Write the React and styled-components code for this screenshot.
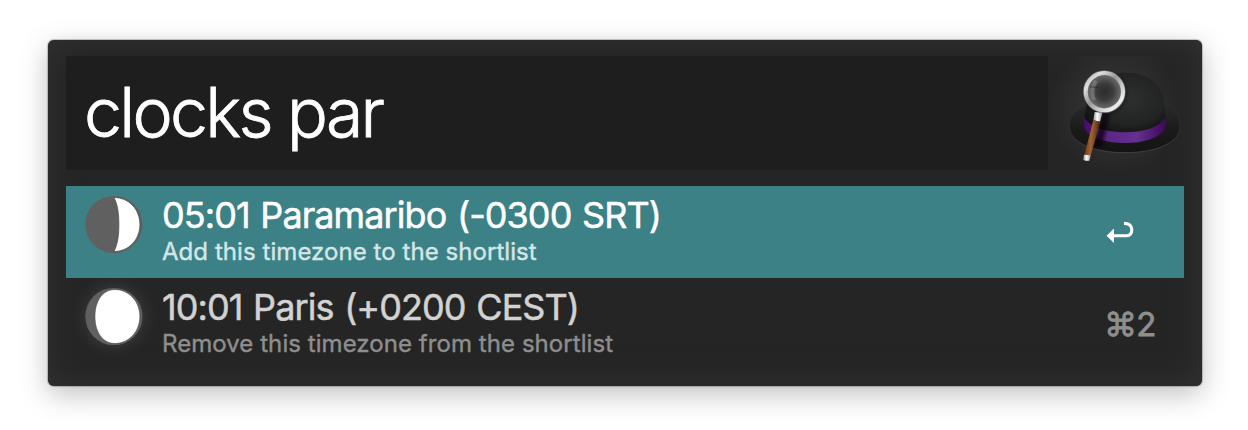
import React from 'react';
import styled, { createGlobalStyle } from 'styled-components';

const GlobalStyle = createGlobalStyle`
  *, *::before, *::after { box-sizing: border-box; }
  body { margin: 0; background: #fff; font-family: Inter, "Liberation Sans", sans-serif; }
`;

const Stage = styled.main`
  width: 1248px;
  height: 430px;
  padding: 40px 46px 44px 48px;
  overflow: hidden;
`;

const Launcher = styled.section`
  display: flex;
  flex-direction: column;
  gap: 16px;
  width: 1154px;
  height: 346px;
  padding: 16px 18px;
  border-radius: 6px;
  background: #252525;
  box-shadow: inset 0 0 34px #323232, 0 0 1px 1px rgba(0, 0, 0, 0.22),
    0 8px 28px rgba(0, 0, 0, 0.25);
`;

const Header = styled.header`
  display: flex;
  height: 114px;
`;

const Query = styled.div`
  display: flex;
  flex: none;
  align-items: center;
  width: 982px;
  padding: 0 0 2px 18px;
  background: #1e1e1e;
  color: #fff;
  font-size: 68px;
  font-weight: 300;
  letter-spacing: -2.75px;
  line-height: 80px;
  white-space: pre;
  -webkit-text-stroke: 0.8px currentColor;
`;

const Logo = styled.div`
  flex: none;
  width: 136px;
  padding: 10px 0 0 18px;
  background: radial-gradient(circle at 50% 45%, #313131 30%, rgba(46, 46, 46, 0) 72%);

  svg { display: block; }
`;

const Results = styled.ul`
  margin: 0;
  padding: 0;
  list-style: none;
`;

const Row = styled.li`
  display: flex;
  height: 92px;
  padding-left: 18px;
  background: ${(p) => (p.$selected ? '#3b8186' : 'transparent')};
`;

const MoonIcon = styled.svg`
  flex: none;
  width: 60px;
  height: 60px;
  margin: 8px 18px 0 0;
  overflow: visible;
  filter: ${(p) => (p.$glow ? 'drop-shadow(0 0 9px rgba(255,255,255,0.13))' : 'none')};
`;

const Labels = styled.div`
  flex: 1;
  padding-top: 7px;
  white-space: nowrap;
`;

const Title = styled.div`
  color: ${(p) => (p.$selected ? '#fff' : '#d2d2d2')};
  font-size: 36px;
  line-height: 44px;
  letter-spacing: -0.92px;
  word-spacing: 1.4px;
  -webkit-text-stroke: 0.5px currentColor;
`;

const Subtitle = styled.div`
  color: ${(p) => (p.$selected ? '#d5e6e6' : '#8e8e8e')};
  font-size: 24px;
  line-height: 30px;
  letter-spacing: 0.06px;
  -webkit-text-stroke: 0.4px currentColor;
`;

const Shortcut = styled.div`
  display: flex;
  align-items: center;
  width: 78px;
  color: ${(p) => (p.$selected ? '#fff' : '#8e8e8e')};
  font-size: 33px;
  line-height: 40px;
  letter-spacing: -0.8px;
  text-indent: -2px;
  -webkit-text-stroke: 0.8px currentColor;
`;

const AppHat = () => (
  <svg width="120" height="100" viewBox="78 78 360 300">
    <defs>
      <radialGradient id="crown" cx="0.55" cy="0.45" r="0.62">
        <stop offset="0" stopColor="#2d302f" />
        <stop offset="0.7" stopColor="#222423" />
        <stop offset="1" stopColor="#111212" />
      </radialGradient>
      <linearGradient id="band" x1="0" x2="1">
        <stop offset="0" stopColor="#430c68" />
        <stop offset="0.3" stopColor="#5c2587" />
        <stop offset="0.65" stopColor="#66308f" />
        <stop offset="1" stopColor="#3b0859" />
      </linearGradient>
      <linearGradient id="brim" x1="0" y1="0" x2="0" y2="1">
        <stop offset="0" stopColor="#292929" />
        <stop offset="0.5" stopColor="#1b1b1b" />
        <stop offset="1" stopColor="#131313" />
      </linearGradient>
      <linearGradient id="brimEdge" x1="0" y1="0" x2="0" y2="1">
        <stop offset="0.35" stopColor="#2b2b2b" />
        <stop offset="1" stopColor="#484848" />
      </linearGradient>
      <linearGradient id="rim" x1="0" y1="0" x2="1" y2="1">
        <stop offset="0" stopColor="#a0a0a0" />
        <stop offset="0.2" stopColor="#e0e0e0" />
        <stop offset="0.45" stopColor="#989898" />
        <stop offset="0.65" stopColor="#c8c8c8" />
        <stop offset="0.85" stopColor="#eee" />
        <stop offset="1" stopColor="#888" />
      </linearGradient>
      <radialGradient id="glass">
        <stop offset="0" stopColor="#2c2c2c" />
        <stop offset="0.45" stopColor="#3b3b3b" />
        <stop offset="1" stopColor="#747474" />
      </radialGradient>
      <linearGradient id="wood" x1="0" x2="1" y1="0" y2="0.18">
        <stop offset="0.1" stopColor="#633718" />
        <stop offset="0.5" stopColor="#a16331" />
        <stop offset="0.9" stopColor="#573015" />
      </linearGradient>
      <linearGradient id="steel" x1="0" x2="1">
        <stop offset="0" stopColor="#999" />
        <stop offset="0.45" stopColor="#fff" />
        <stop offset="1" stopColor="#999" />
      </linearGradient>
      <filter id="soft" x="-50%" y="-20%" width="200%" height="140%">
        <feGaussianBlur stdDeviation="5" />
      </filter>
    </defs>
    <path d="M88 258C88 228 112 208 140 196H372C401 208 420 230 420 260C420 307 350 338 256 338C160 338 88 308 88 258Z" fill="url(#brim)" stroke="url(#brimEdge)" strokeWidth="2.5" />
    <path d="M133 234C136 215 139 202 142 181C151 123 198 98 260 98C327 98 372 137 373 198L377 234C373 286 136 288 133 234Z" fill="url(#crown)" />
    <path d="M132 232C150 262 194 277 256 277C316 277 358 261 376 232C378 249 378 261 373 270C354 295 310 309 256 309C199 309 154 295 136 270C131 260 131 247 132 232Z" fill="url(#band)" />
    <path d="M190 220L209 224L186 320L158 323Z" fill="#080510" opacity="0.72" filter="url(#soft)" />
    <circle cx="196" cy="160" r="60" fill="none" stroke="#080808" strokeWidth="8" opacity="0.4" filter="url(#soft)" />
    <circle cx="194" cy="155" r="55" fill="url(#glass)" />
    <path d="M158 181C148 157 151 137 164 119L173 126C161 143 161 161 168 179Z" fill="#aaa" opacity="0.35" />
    <path d="M149 139L174 141V144L149 142Z" fill="#292929" opacity="0.7" />
    <circle cx="193" cy="155" r="56" fill="none" stroke="url(#rim)" strokeWidth="13" />
    <circle cx="193" cy="155" r="49" fill="none" stroke="#666" strokeWidth="2" opacity="0.7" />
    <circle cx="193" cy="155" r="63" fill="none" stroke="#777" strokeWidth="2" opacity="0.7" />
    <path d="M164 216L187 218L180 245L160 241Z" fill="url(#steel)" />
    <path d="M160 241L181 245L152 347L133 345Z" fill="url(#wood)" />
    <path d="M132 344L152 346L148 362Q138 364 130 359Z" fill="url(#steel)" />
  </svg>
);

const phases = {
  quarter: 'M30 3C34 10 35 20 35 30S34 50 30 57C45 57 56 45 56 30S45 3 30 3Z',
  gibbous: 'M31 3C19 3 11 14 11 30S19 57 31 57C45 57 56 45 56 30S45 3 31 3Z',
};

const Moon = ({ phase, glow }) => (
  <MoonIcon viewBox="0 0 60 60" $glow={glow}>
    <circle cx="29.9" cy="30.5" r="28.6" fill="#606060" />
    <path d={phases[phase]} transform="translate(-0.1 0.5)" fill="#fff" stroke="#4c4c4c" strokeWidth="0.7" />
  </MoonIcon>
);

const ReturnArrow = () => (
  <svg width="30" height="26" viewBox="0 0 30 26" fill="none">
    <path d="M7 16.8H20C24 16.8 25.8 14.3 25.8 10.7C25.8 6.6 23 4.4 18 4.4" stroke="currentColor" strokeWidth="3.1" />
    <path d="M0.5 16.8L8 9.6V24Z" fill="currentColor" />
  </svg>
);

const items = [
  { title: '05:01 Paramaribo (-0300 SRT)', subtitle: 'Add this timezone to the shortlist', phase: 'quarter', selected: true },
  { title: '10:01 Paris (+0200 CEST)', subtitle: 'Remove this timezone from the shortlist', phase: 'gibbous', selected: false },
];

export default function App() {
  return (
    <>
      <GlobalStyle />
      <Stage>
        <Launcher>
          <Header>
            <Query>clocks par</Query>
            <Logo><AppHat /></Logo>
          </Header>
          <Results>
            {items.map((item) => (
              <Row key={item.title} $selected={item.selected}>
                <Moon phase={item.phase} glow={!item.selected} />
                <Labels>
                  <Title $selected={item.selected}>{item.title}</Title>
                  <Subtitle $selected={item.selected}>{item.subtitle}</Subtitle>
                </Labels>
                <Shortcut $selected={item.selected}>
                  {item.selected ? <ReturnArrow /> : '⌘2'}
                </Shortcut>
              </Row>
            ))}
          </Results>
        </Launcher>
      </Stage>
    </>
  );
}
